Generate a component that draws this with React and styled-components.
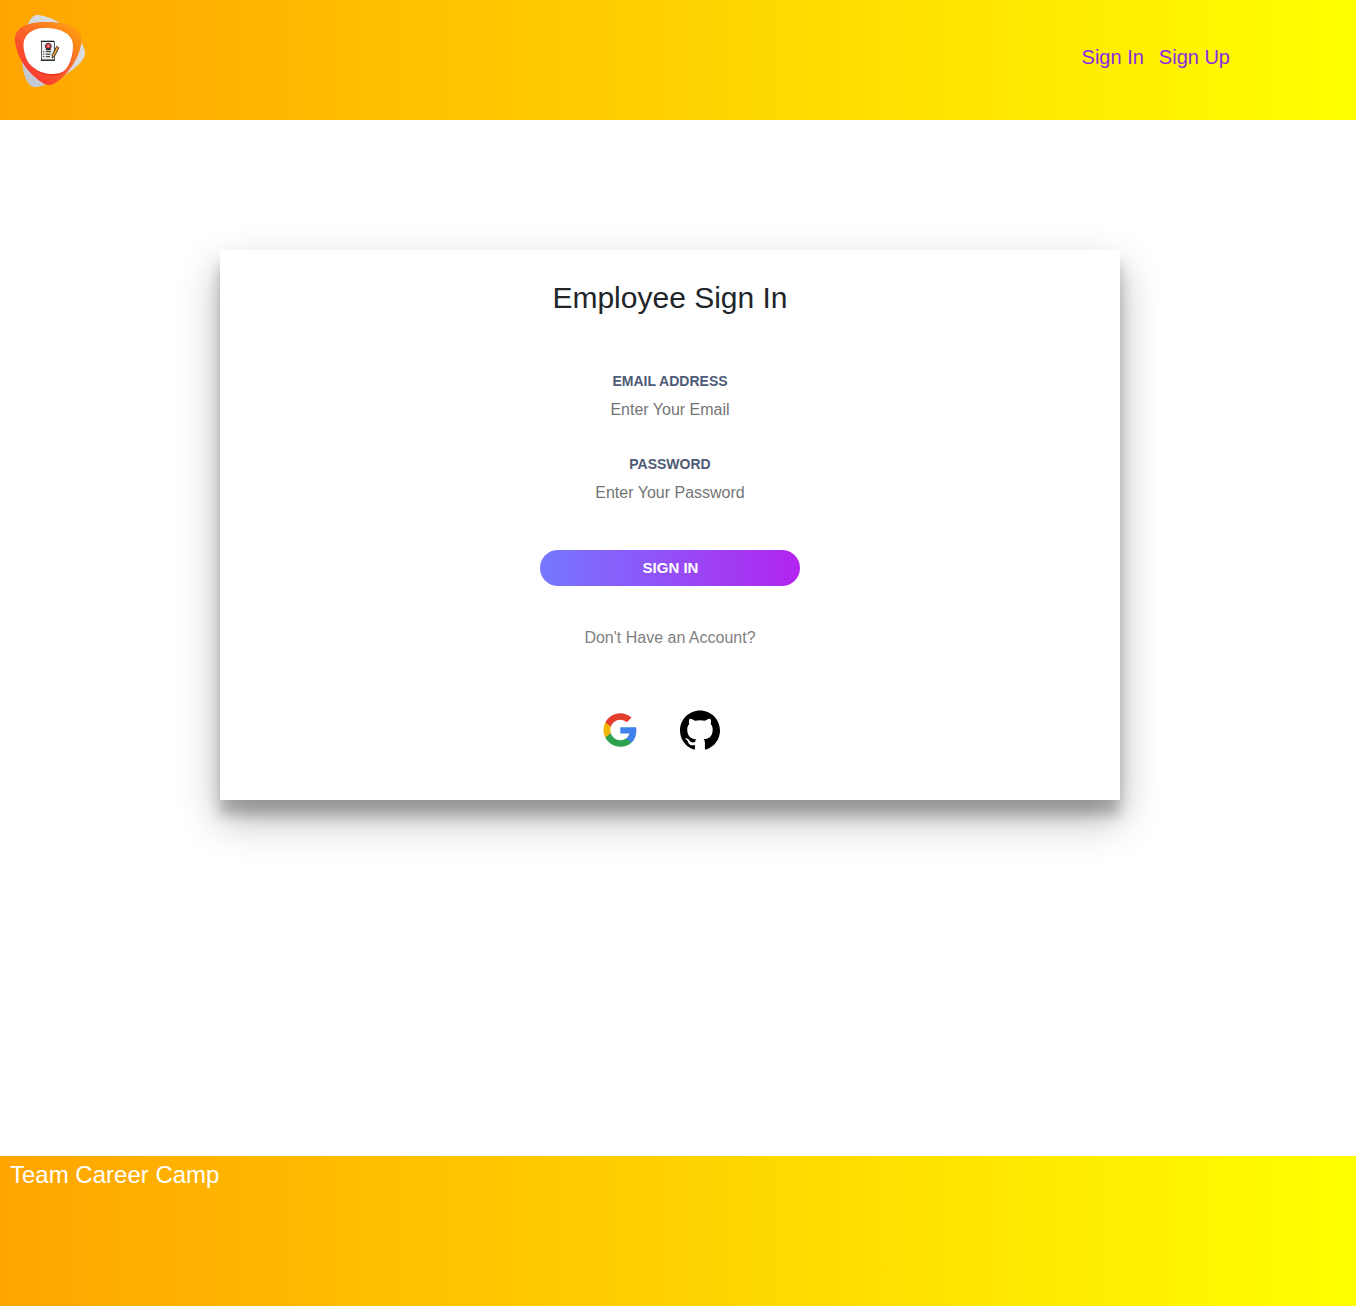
import React from 'react';
import styled, { createGlobalStyle } from 'styled-components';

const GlobalStyle = createGlobalStyle`
  *, *::before, *::after { box-sizing: border-box; }
  body {
    margin: 0;
    background: #fff;
    color: #212529;
    font-family: "Liberation Sans", Arial, sans-serif;
    font-size: 16px;
    line-height: 24px;
  }
`;

const Page = styled.div`
  width: 1356px;
  min-height: 1306px;
  display: flex;
  flex-direction: column;
`;

const Header = styled.header`
  height: 120px;
  padding: 10px 126px 0 10px;
  display: flex;
  justify-content: space-between;
  align-items: flex-start;
  background: linear-gradient(to right, orange, yellow);
`;

const LogoArt = styled.svg`
  display: block;
  width: 80px;
  height: 80px;
`;

const Nav = styled.nav`
  display: flex;
  gap: 15px;
  padding-top: 32px;
`;

const NavLink = styled.a`
  color: blueviolet;
  font-size: 20px;
  line-height: 30px;
  text-decoration: none;
`;

const Main = styled.main`
  flex: 1;
  padding: 130px 0 0 220px;
`;

const Card = styled.form`
  width: 900px;
  height: 550px;
  padding-top: 30px;
  display: flex;
  flex-direction: column;
  align-items: center;
  background: #fff;
  box-shadow: 0 19px 38px rgba(0, 0, 0, 0.3), 0 15px 12px rgba(0, 0, 0, 0.22);
`;

const Title = styled.h1`
  margin: 0 0 54px;
  font-size: 30px;
  font-weight: 400;
  line-height: 36px;
`;

const Field = styled.div`
  width: 260px;
  height: 83px;
  display: flex;
  flex-direction: column;
  align-items: center;
`;

const Label = styled.label`
  color: #4d5b76;
  font-size: 14px;
  font-weight: 700;
  line-height: 22px;
  text-transform: uppercase;
`;

const Input = styled.input`
  width: 100%;
  height: 24px;
  margin-top: 6px;
  padding: 0;
  border: 0;
  outline: 0;
  background: transparent;
  font: inherit;
  text-align: center;
  &::placeholder { color: #757575; opacity: 1; }
`;

const Submit = styled.button`
  width: 260px;
  height: 36px;
  margin-top: 14px;
  padding: 0 0 0 1px;
  border: 0;
  border-radius: 18px;
  background: linear-gradient(to right, #7579ff, #b224ef);
  color: #fff;
  font: 700 15px/36px "Liberation Sans", Arial, sans-serif;
`;

const Hint = styled.p`
  margin: 40px 0 0;
  color: #808080;
`;

const Socials = styled.div`
  display: flex;
  gap: 40px;
  margin: 60px 20px 0 0;
`;

const SocialLink = styled.a`
  display: block;
  width: 40px;
  height: 40px;
  svg { display: block; }
`;

const Footer = styled.footer`
  height: 150px;
  padding: 1px 10px;
  background: linear-gradient(to right, orange, yellow);
  color: #fff;
  font-size: 24px;
  line-height: 36px;
`;

function Logo() {
  return (
    <LogoArt viewBox="10 10 80 80" role="img">
      <defs>
        <linearGradient id="silver" x1="0" y1="1" x2="1" y2="0">
          <stop offset="0" stopColor="#bfc4cf" />
          <stop offset="1" stopColor="#e6e7e9" />
        </linearGradient>
        <linearGradient id="flame" x1="0.2" y1="0.9" x2="0.9" y2="0.1">
          <stop offset="0" stopColor="#fb3532" />
          <stop offset="0.5" stopColor="#fb6429" />
          <stop offset="1" stopColor="#fd9b12" />
        </linearGradient>
      </defs>
      <path fill="url(#silver)" d="M29 22C32 16 35 14 41 15.500C50 17 63 23 72 32C79 39 85 46 85 53C85 59 79 65 71 71C60 79 46 85 38 87C31 88 28 84 25.500 78C21 66 21 52 22 43C23 34 25 28 29 22Z" />
      <path fill="url(#flame)" d="M15 39C15 28 27 22 45 22C60 22 76 24 80.500 34C84 43 78 59 69 70C64 77 55 85 49 85C43 85 34 77 27 69C19 59 15 47 15 39Z" />
      <path fill="#e52c1e" opacity="0.65" d="M24 47C24 37 33 30 45 30C59 30 73 35 73 48C73 57 70 66 66 70C62 75 57 76 51 76C42 76 33 70 28 63C25 58 24 52 24 47Z" />
      <path fill="#fff" d="M23.500 45C23.500 34 33 28 45 28C59 28 73 33 73 46C73 55 70 64 66 69C62 73.500 57 74 51 74C42 74 33 69 28 62C25 57 23.500 50 23.500 45Z" />
      <path fill="#f0f0f0" stroke="#111" strokeWidth="0.7" d="M41.500 41.500H54.500V60H41.500Z" />
      <path stroke="#111" strokeWidth="1" d="M40.800 41.200H54M40.800 60.300H55" />
      <circle cx="48.300" cy="46.300" r="2.900" fill="#ed3941" stroke="#242b35" strokeWidth="1" />
      <path fill="#252b35" d="M45.800 49.300Q48.300 46.800 50.800 49.300V50.200H45.800Z" />
      <circle cx="48.300" cy="46" r="0.900" fill="#f3aaa0" />
      <path stroke="#222" strokeWidth="1" d="M43 51.700H44.200M45.700 51.700H51M43 54.200H44.200M45.700 54.200H50.500M43 56.700H44.200M45.700 56.700H50" />
      <path fill="#e9a33c" stroke="#19191b" strokeWidth="0.8" d="M56.700 46.300L58.900 47.800L54.500 56.300L52.300 58L52.200 55.200Z" />
      <path stroke="#e55b57" strokeWidth="1.200" d="M56.800 46.900L58.300 47.900" />
    </LogoArt>
  );
}

function GoogleIcon() {
  return (
    <svg width="40" height="40" viewBox="0 0 40 40">
      <g transform="translate(3.500 3.200) scale(1.4)">
        <path fill="#4081ec" d="M23.490 12.270c0-.79-.07-1.540-.19-2.270H12v4.510h6.470c-.29 1.480-1.140 2.730-2.400 3.580v3h3.860c2.260-2.090 3.560-5.170 3.560-8.820z" />
        <path fill="#2fa24f" d="M12 24c3.240 0 5.950-1.080 7.930-2.910l-3.860-3c-1.080.72-2.450 1.160-4.070 1.160-3.130 0-5.780-2.110-6.730-4.960H1.290v3.090C3.260 21.300 7.310 24 12 24z" />
        <path fill="#f2b705" d="M5.270 14.290c-.25-.72-.38-1.490-.38-2.290s.14-1.570.38-2.290V6.620H1.290C.47 8.240 0 10.060 0 12s.47 3.760 1.290 5.380l3.980-3.090z" />
        <path fill="#e43e2f" d="M12 4.750c1.770 0 3.350.61 4.600 1.800l3.420-3.420C17.950 1.190 15.240 0 12 0 7.310 0 3.260 2.700 1.290 6.620l3.980 3.090C6.220 6.860 8.870 4.750 12 4.750z" />
      </g>
    </svg>
  );
}

function GithubIcon() {
  return (
    <svg width="40" height="40" viewBox="0 0 24 24">
      <path fill="#000" d="M12 .297c-6.630 0-12 5.373-12 12 0 5.303 3.438 9.800 8.205 11.385.6.113.82-.258.82-.577 0-.285-.01-1.040-.015-2.040-3.338.724-4.042-1.610-4.042-1.610C4.422 18.070 3.633 17.700 3.633 17.700c-1.087-.744.084-.729.084-.729 1.205.084 1.838 1.236 1.838 1.236 1.070 1.835 2.809 1.305 3.495.998.108-.776.417-1.305.76-1.605-2.665-.3-5.466-1.332-5.466-5.930 0-1.310.465-2.380 1.235-3.220-.135-.303-.54-1.523.105-3.176 0 0 1.005-.322 3.300 1.230.96-.267 1.980-.399 3-.405 1.020.006 2.040.138 3 .405 2.280-1.552 3.285-1.230 3.285-1.230.645 1.653.24 2.873.12 3.176.765.840 1.230 1.910 1.230 3.220 0 4.610-2.805 5.625-5.475 5.920.42.360.81 1.096.81 2.220 0 1.606-.015 2.896-.015 3.286 0 .315.210.690.825.570C20.565 22.092 24 17.592 24 12.297c0-6.627-5.373-12-12-12" />
    </svg>
  );
}

export default function App() {
  return (
    <>
      <GlobalStyle />
      <Page>
        <Header>
          <Logo />
          <Nav>
            <NavLink>Sign In</NavLink>
            <NavLink>Sign Up</NavLink>
          </Nav>
        </Header>
        <Main>
          <Card>
            <Title>Employee Sign In</Title>
            <Field>
              <Label htmlFor="email">Email Address</Label>
              <Input id="email" type="email" placeholder="Enter Your Email" />
            </Field>
            <Field>
              <Label htmlFor="password">Password</Label>
              <Input id="password" type="password" placeholder="Enter Your Password" />
            </Field>
            <Submit type="button">SIGN IN</Submit>
            <Hint>Don't Have an Account?</Hint>
            <Socials>
              <SocialLink><GoogleIcon /></SocialLink>
              <SocialLink><GithubIcon /></SocialLink>
            </Socials>
          </Card>
        </Main>
        <Footer>Team Career Camp</Footer>
      </Page>
    </>
  );
}
